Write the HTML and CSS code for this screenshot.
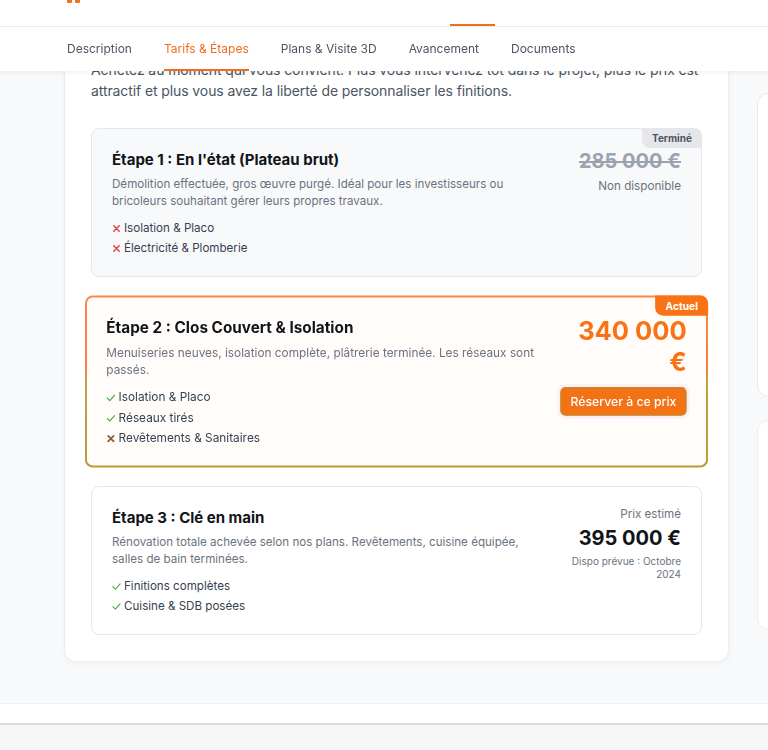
FILE: index.html
```html
<!DOCTYPE html>
<html lang="fr">
<head>
<meta charset="utf-8">
<title>Tarifs &amp; Étapes</title>
<link rel="stylesheet" href="styles.css">
</head>
<body>
<div class="topbar">
  <header class="site-header">
    <svg class="logo" width="14" height="4" viewBox="0 0 14 4" aria-hidden="true">
      <rect x="0" y="-2" width="5" height="5" rx="1.5" fill="#f26b1f"/>
      <rect x="8" y="-2" width="5" height="5" rx="1.5" fill="#f26b1f"/>
    </svg>
    <span class="nav-indicator"></span>
  </header>
  <nav class="tabs">
    <a class="tab">Description</a>
    <a class="tab active">Tarifs &amp; Étapes</a>
    <a class="tab">Plans &amp; Visite 3D</a>
    <a class="tab">Avancement</a>
    <a class="tab">Documents</a>
  </nav>
</div>

<div class="page">
  <div class="layout">
    <main class="pricing-card">
      <p class="intro">Achetez au moment qui vous convient. Plus vous intervenez tôt dans le projet, plus le prix est attractif et plus vous avez la liberté de personnaliser les finitions.</p>

      <div class="steps">
        <article class="step step-done">
          <span class="badge badge-done">Terminé</span>
          <div class="step-info">
            <h3 class="step-title">Étape 1 : En l'état (Plateau brut)</h3>
            <p class="step-desc">Démolition effectuée, gros œuvre purgé. Idéal pour les investisseurs ou bricoleurs souhaitant gérer leurs propres travaux.</p>
            <ul class="features">
              <li><svg class="ico ico-no" viewBox="0 0 10 10"><path d="M2 2 8 8M8 2 2 8"/></svg>Isolation &amp; Placo</li>
              <li><svg class="ico ico-no" viewBox="0 0 10 10"><path d="M2 2 8 8M8 2 2 8"/></svg>Électricité &amp; Plomberie</li>
            </ul>
          </div>
          <div class="step-price">
            <div class="price price-old">285 000 €</div>
            <div class="price-note">Non disponible</div>
          </div>
        </article>

        <article class="step step-current">
          <span class="badge badge-current">Actuel</span>
          <div class="step-info">
            <h3 class="step-title">Étape 2 : Clos Couvert &amp; Isolation</h3>
            <p class="step-desc">Menuiseries neuves, isolation complète, plâtrerie terminée. Les réseaux sont passés.</p>
            <ul class="features">
              <li><svg class="ico ico-yes" viewBox="0 0 10 10"><path d="M1 5.2 3.8 8 9 2.2"/></svg>Isolation &amp; Placo</li>
              <li><svg class="ico ico-yes" viewBox="0 0 10 10"><path d="M1 5.2 3.8 8 9 2.2"/></svg>Réseaux tirés</li>
              <li><svg class="ico ico-no ico-muted" viewBox="0 0 10 10"><path d="M2 2 8 8M8 2 2 8"/></svg>Revêtements &amp; Sanitaires</li>
            </ul>
          </div>
          <div class="step-price">
            <div class="price price-current">340 000 €</div>
            <button class="btn-reserve">Réserver à ce prix</button>
          </div>
        </article>

        <article class="step step-future">
          <div class="step-info">
            <h3 class="step-title">Étape 3 : Clé en main</h3>
            <p class="step-desc">Rénovation totale achevée selon nos plans. Revêtements, cuisine équipée, salles de bain terminées.</p>
            <ul class="features">
              <li><svg class="ico ico-yes" viewBox="0 0 10 10"><path d="M1 5.2 3.8 8 9 2.2"/></svg>Finitions complètes</li>
              <li><svg class="ico ico-yes" viewBox="0 0 10 10"><path d="M1 5.2 3.8 8 9 2.2"/></svg>Cuisine &amp; SDB posées</li>
            </ul>
          </div>
          <div class="step-price">
            <div class="price-label">Prix estimé</div>
            <div class="price">395 000 €</div>
            <div class="price-small">Dispo prévue : Octobre 2024</div>
          </div>
        </article>
      </div>
    </main>

    <aside class="sidebar">
      <div class="side-card side-card-accent"></div>
      <div class="side-card"></div>
    </aside>
  </div>

  <footer class="footer">
    <div class="footer-top"></div>
    <div class="footer-bottom"></div>
  </footer>
</div>
</body>
</html>
```

FILE: styles.css
```css
* { box-sizing: border-box; }

html, body {
  margin: 0;
  padding: 0;
  overflow-x: hidden;
}

body {
  background: #f8f9fa;
  font-family: Inter, "Noto Sans", "Liberation Sans", sans-serif;
  color: #1f2328;
}

/* ---------- sticky top bar ---------- */
.topbar {
  position: fixed;
  top: 0;
  left: 0;
  right: 0;
  z-index: 10;
}

.site-header {
  height: 27px;
  background: #fff;
  border-bottom: 1px solid #ececec;
  display: flex;
  align-items: flex-start;
  padding-left: 67px;
}

.logo { display: block; }

.nav-indicator {
  margin-left: 369px;
  margin-top: 24px;
  width: 45px;
  height: 2px;
  background: #f26b1f;
}

.tabs {
  height: 44px;
  background: #fff;
  display: flex;
  gap: 32px;
  padding-left: 67px;
  box-shadow: 0 2px 4px rgba(0, 0, 0, 0.05);
}

.tab {
  display: flex;
  align-items: center;
  font-size: 12px;
  color: #4b5563;
  border-bottom: 2px solid transparent;
  cursor: pointer;
}

.tab.active {
  color: #f26b1f;
  border-bottom-color: #f26b1f;
}

/* ---------- layout ---------- */
.layout {
  display: flex;
  align-items: flex-start;
  gap: 28px;
  padding: 32px 0 41px 64px;
  width: 1100px;
}

.pricing-card {
  flex: 0 0 665px;
  background: #fff;
  border: 1px solid #ebedf0;
  border-radius: 12px;
  box-shadow: 0 2px 6px rgba(0, 0, 0, 0.04);
  padding: 26px;
}

.intro {
  margin: 0 0 27px;
  font-size: 14px;
  line-height: 21px;
  letter-spacing: -0.1px;
  color: #4b5563;
}

.steps {
  display: flex;
  flex-direction: column;
  gap: 20px;
}

/* ---------- step cards ---------- */
.step {
  position: relative;
  display: flex;
  gap: 20px;
  padding: 19px 20px 18px;
  border: 1px solid #e5e7eb;
  border-radius: 8px;
  background: #fff;
}

.step-done { background: #f8f9fb; }

.step-current {
  border: 2px solid transparent;
  padding: 18px 19px 17px;
  background:
    linear-gradient(#fffcf9, #fffcf9) padding-box,
    linear-gradient(to bottom, #f98a4c 0%, #f97f3d 44%, #c2a23e 46%, #b89b3a 100%) border-box;
  transform: scale(1.02);
}

.badge {
  position: absolute;
  top: -1px;
  right: -1px;
  font-size: 10px;
  font-weight: 700;
  line-height: 14px;
  padding: 3px 10px;
  border-radius: 0 8px 0 8px;
}

.badge-done { background: #e5e7eb; color: #4b5563; }

.badge-current {
  top: -2px;
  right: -2px;
  background: #f97316;
  color: #fff;
}

.step-info { flex: 1; min-width: 0; }

.step-title {
  margin: 0 0 4px;
  font-size: 15px;
  line-height: 24px;
  font-weight: 700;
  color: #111418;
}

.step-desc {
  margin: 0 0 8px;
  font-size: 11.6px;
  line-height: 17px;
  color: #6b7280;
}

.features {
  list-style: none;
  margin: 0;
  padding: 0;
}

.features li {
  display: flex;
  align-items: center;
  gap: 3px;
  font-size: 11.6px;
  line-height: 20px;
  color: #374151;
}

.ico {
  width: 9px;
  height: 9px;
  fill: none;
  stroke-linecap: round;
  stroke-linejoin: round;
  flex: none;
}

.ico-no { stroke: #e5484d; stroke-width: 1.8; }
.ico-muted { stroke: #8a5a3a; }
.ico-yes { stroke: #4caf50; stroke-width: 1.3; }

/* ---------- price column ---------- */
.step-price {
  flex: 0 0 124px;
  text-align: right;
}

.price {
  font-size: 20px;
  line-height: 26px;
  font-weight: 700;
  color: #111418;
}

.price-old {
  color: #9ca3af;
  text-decoration: line-through;
}

.price-note {
  margin-top: 4px;
  font-size: 11.7px;
  line-height: 17px;
  color: #6b7280;
}

.price-current {
  font-size: 25px;
  line-height: 30px;
  color: #f97316;
}

.btn-reserve {
  margin-top: 10px;
  width: 124px;
  height: 28px;
  border: 1px solid #b8902e;
  border-radius: 5px;
  background: #f47216;
  color: #fff;
  font-family: inherit;
  font-size: 12px;
  font-weight: 500;
  white-space: nowrap;
  box-shadow: 0 0 0 3px #fdeef8;
}

.price-label {
  font-size: 11.6px;
  line-height: 17px;
  color: #6b7280;
}

.step-future .price { margin-top: 2px; }

.price-small {
  margin-top: 4px;
  font-size: 10px;
  line-height: 13px;
  color: #6b7280;
}

/* ---------- sidebar (mostly off-screen) ---------- */
.sidebar {
  flex: 0 0 320px;
  margin-top: 61px;
  display: flex;
  flex-direction: column;
  gap: 23px;
}

.side-card {
  height: 210px;
  background: #fff;
  border: 1px solid #eceef1;
  border-radius: 12px;
}

.side-card-accent {
  height: 304px;
  border-color: #f6e7e0;
}

/* ---------- footer ---------- */
.footer-top {
  height: 20px;
  background: #fff;
  border-top: 1px solid #eef0f2;
}

.footer-bottom {
  height: 60px;
  background: #f6f6f7;
  border-top: 2px solid #d9dbde;
}
```
